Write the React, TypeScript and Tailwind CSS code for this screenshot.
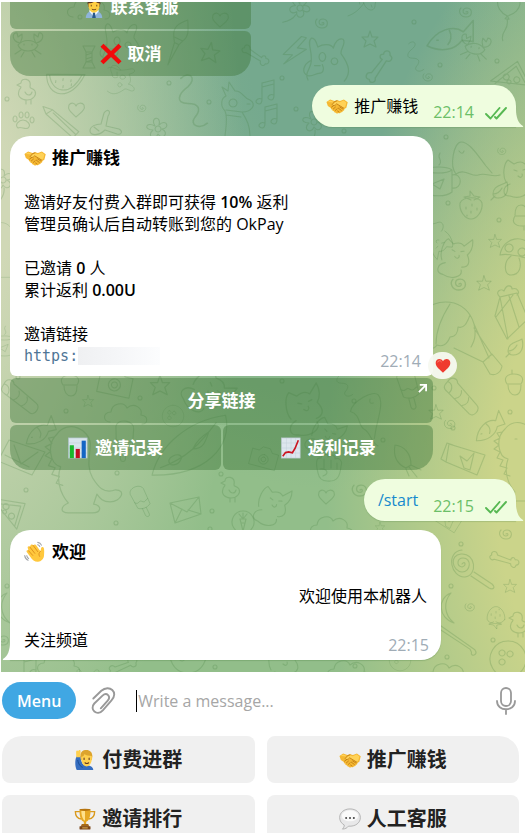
import type { ReactNode } from "react";

const FONT = "font-['Open_Sans','Noto_Sans_CJK_SC',sans-serif]";

/* ---------- Emoji ---------- */

type EmojiName =
  | "handshake"
  | "cross"
  | "bars"
  | "trend"
  | "wave"
  | "raise"
  | "trophy"
  | "speech"
  | "agent"
  | "heart";

const EMOJI: Record<EmojiName, ReactNode> = {
  handshake: (
    <>
      <path d="M.5 7.500 4.500 5l4.700 1.500 3-.900 3 .900L19.500 4.800l4.200 3-1.500 6-2.200 1.400c.3 1.400-.6 2-1.600 2 0 1.200-1 1.900-2 1.600-.5 1.100-1.700 1.600-2.600.9-1 .9-2.600.6-3-.4-1.200.2-2-.5-2.100-1.500-1.300 0-2-.8-1.800-1.900-1.300-.1-1.800-.9-1.600-1.800L2 12z" fill="#f5b833" />
      <path d="m1.500 7.700 3.200-1.600 4.100 1.400-2 3c.6 2 3.200 1.400 4.800-.8 2.200 1.200 5 2.600 7.500 4.400l1.900-1.200 1.200-4.800L19.200 6 15 8l-2.800-1-2.800 1.200" fill="#ffd257" />
      <path d="m12 6.200-3 1.300-2.200 3c.6 1.700 3.200 1.200 4.800-.9l7.700 4.700M6 13.300l2-1.500M8 15.200l2.300-2M10.200 16.800l2-1.800m1.200-.7 3.300 2.500m-4 .7 1.500 1m.7-5.500 3.500 2.300" fill="none" stroke="#bd7b12" strokeWidth=".9" strokeLinecap="round" />
    </>
  ),
  cross: (
    <path d="M3.800.800 12 8.800 20.200.800 23.500 4 15.300 12l8.200 8-3.300 3.200L12 15.200l-8.200 8L.5 20l8.200-8L.500 4z" fill="#f20b0b" />
  ),
  bars: (
    <>
      <rect x="1.5" y="1" width="20.5" height="22" fill="#d9e5ec" stroke="#a9bdc4" strokeWidth=".7" />
      <path d="M2 6.5h20M2 12h20M2 17.500h20" stroke="#b9cbd3" strokeWidth=".5" />
      <rect x="3" y="9" width="4.500" height="14" fill="#19b72b" />
      <rect x="9.500" y="13" width="4.500" height="10" fill="#c30d20" />
      <rect x="16" y="4" width="4.500" height="19" fill="#1465c4" />
    </>
  ),
  trend: (
    <>
      <rect x="1.500" y="1" width="20.500" height="22" fill="#dde6ee" stroke="#b7c5cb" strokeWidth=".7" />
      <path d="M2 6.500h20M2 12h20M2 17.500h20M7 1v22M12 1v22M17 1v22" stroke="#c0ced8" strokeWidth=".5" />
      <path d="m3 21 3-4 3.500-.700 4 .900 3-5L20 3.500" fill="none" stroke="#cb1520" strokeWidth="1.800" />
    </>
  ),
  wave: (
    <>
      <path d="M7 17.500 3 12c-1-1.500.700-2.700 1.900-1.400L4.200 8C3.300 6.300 5.300 5 6.400 6.500L7 5c.300-1.700 2.200-1.600 2.900-.500l1.300-.500c1-.300 1.800.200 2.500 1.300l4.200 6 .700-2.800c0-2 2.300-2.600 3-.800.600 1.700.500 5 .200 8.500-.300 3.500-3 6.300-6.500 6.500-3.500.200-6.200-1.700-8.300-5.200z" fill="#ffc83d" />
      <path d="m4.800 10.500 4.700 5.200M6.300 6.500l5.500 7M9.800 4.600l5.200 7M18 11.300c-2 1.500-2.300 3.500-1 5.500" fill="none" stroke="#dc8d1c" strokeWidth="1" strokeLinecap="round" />
      <path d="M15 1.500c2 .300 3.300 1.400 4 3M15 4c1 .300 1.800 1 2.200 2M.800 16c.200 2 1.500 4 3.700 5M3 16c.300 1.500 1 2.500 2 3" fill="none" stroke="#a4a7ab" strokeWidth="1.200" strokeLinecap="round" />
    </>
  ),
  raise: (
    <>
      <path d="M3 8c-2 3-2.300 10.500 0 15h18c0-3-2.500-5-7-5-4 0-6-2-7-10z" fill="#356dc0" />
      <path d="M2.500 9 2.300 3.500C2.200 1.500 4 1 4.600 2.500L5 1.500c1-1 2.500-.300 2.200 1.200L6.800 9z" fill="#ffd04e" />
      <path d="M7 8c0-5 2.500-7 6.500-7S20 3.500 20 8l-.500 4h-12z" fill="#dda42d" />
      <path d="M8 8.500c2 0 3-1.500 3.500-3 1.500 1.700 5 2 7.800 2 .900 5.500-1.500 11.500-5.500 11.500S7.500 13.800 8 8.500z" fill="#ffd04e" />
      <path d="M11 10v1.500M16.500 10v1.500M12 15c1.300 1 2.800 1 4 0" stroke="#653c20" strokeWidth="1.200" fill="none" strokeLinecap="round" />
      <path d="M4 12c1 5 3 7 5.500 8" stroke="#174a92" fill="none" />
    </>
  ),
  trophy: (
    <>
      <path d="M6.500 4H1.500c0 5 2 7.500 6.500 8m9.500-8h5c0 5-2 7.500-6.500 8" fill="none" stroke="#d99a1e" strokeWidth="1.500" />
      <path d="M6 1.500h12c.300 7-1.500 12.500-4.700 13.500v3h-2.600v-3C7.500 14 5.700 8.500 6 1.500z" fill="#e6a824" />
      <path d="M8 3h4v11C9.500 12.500 8 8.500 8 3z" fill="#ffe18b" />
      <ellipse cx="12" cy="2" rx="6" ry="1.200" fill="#b67510" />
      <path d="M8.500 17.500h7l1.300 3H7.200z" fill="#a4691c" />
      <rect x="6" y="20" width="12" height="3.500" rx=".500" fill="#7c4619" />
      <path d="M9 21.700h6" stroke="#e9bd57" />
    </>
  ),
  speech: (
    <>
      <path d="M12 1C5.500 1 .700 5 .700 10.500c0 3.500 2 6.500 5 8 .200 1.700-.700 3.300-2 4.500 3 0 5.300-1.400 6.600-3.200 7.500.700 13-3.600 13-9.300C23.300 5 18.500 1 12 1z" fill="#e8e8e9" stroke="#aaa" strokeWidth=".900" />
      <ellipse cx="12" cy="8.500" rx="9" ry="6" fill="#fafafa" />
      <circle cx="7.800" cy="11" r="1.100" fill="#444" />
      <circle cx="12" cy="11" r="1.100" fill="#444" />
      <circle cx="16.200" cy="11" r="1.100" fill="#444" />
    </>
  ),
  agent: (
    <>
      <path d="M3 24c0-5 3.500-8 9-8s9 3 9 8z" fill="#8eb4da" />
      <path d="m7 17 5 6 5-6v-2H7z" fill="#eef6ff" />
      <path d="m11 18-1 6h4l-1-6z" fill="#28578c" />
      <path d="M5 8c0-5 3-7 7-7s7 2 7 7l-1 4H6z" fill="#593521" />
      <path d="M6 8c4 0 6-1 7-3 1 2 3 3 5 3 .500 6-2 10-6 10S5.500 14 6 8z" fill="#ffcf42" />
      <path d="M9 10v1m6-1v1m-5 3.500c1.300.800 2.700.800 4 0" fill="none" stroke="#6b4218" strokeLinecap="round" />
    </>
  ),
  heart: (
    <>
      <path d="M12 22C8.500 18 1 14 1 7.500 1 1 9-.500 12 5c3-5.500 11-4 11 2.500C23 14 15.500 18 12 22z" fill="#ef3b2f" />
      <path d="M4 6c1-2.500 4-2.700 5.500-.500" fill="none" stroke="#ff857a" strokeWidth="1.500" strokeLinecap="round" />
    </>
  ),
};

function Emoji({ name, className = "size-[22px]" }: { name: EmojiName; className?: string }) {
  return (
    <svg viewBox="0 0 24 24" className={`shrink-0 ${className}`} aria-hidden="true">
      {EMOJI[name]}
    </svg>
  );
}

/* ---------- Wallpaper ---------- */

// every doodle is drawn around 0,0
const DOODLES = {
  star: "M0-8 2-2 8-2 4 2 6 8 0 5-6 8-4 2-8-2-2-2z",
  heart: "M0 7C-4 3-9 0-7-5c2-3 6-2 7 1 1-3 6-4 8-1C10 0 4 3 0 7z",
  swirl: "M0 0c2-2 3 2 0 2-4 0-4-6 1-6 6 0 6 9-1 9-6 0-8-6-5-9",
  bone: "M-8 4c-5-2-7 4-3 5-1 4 5 4 5 0L6-3c3 2 7-1 4-4 2-4-4-6-5-2-4-1-4 3-2 4z",
  squiggle: "M-8-14c6-6 12 0 5 6-7 5-9 12 0 12 8 0 10 4 5 10-4 5 3 9 9 4",
  chick: "M-9 2c-2 5 2 9 8 9s10-5 8-9c-2-3-5-2-5-4 2-9-9-10-9-4l-4 2 4 2c-1 3-2 2-2 4M-3 3c2 4 6 4 7 0M-2 11v4m5-4v4",
  crab: "M-10 0c5-6 15-6 20 0-3 8-17 8-20 0M-8-2c-9-2-8-11-3-10l1 4 4-3c1 5-1 7-2 9M8-2c9-2 8-11 3-10l-1 4-4-3c-1 5 1 7 2 9M-7 5l-6 4m9-2-3 5M7 5l6 4M4 7l3 5M-4-1v1m8-1v1",
  candy: "M-3-5h6v10h-6zM-3-5l-3-6h12L3-5M-3 5l-3 6h12L3 5M-3-2l6-2m-6 6 6-2m-6 5 6-2",
  dog: "M-20 20c-4-8 4-10 3-20 0-9-4-15 0-18 4-1 5 6 6 8 5-3 12-3 14 1 1-5 5-10 9-8 3 4-3 9-2 13 8 11 9 18 3 25M-17 2c-8 4-9 12-3 14 4 1 7-2 10-2 4 0 5-4 3-8M-7-5a3 4 0 1 0 .1 0M4 0a3 3 0 1 0 .1 0M-14 7h5",
  brush: "M0 25-3 2-6-3c-5-9-1-14 6-21 4 8 8 14 4 21L2 2zM-6-3H4M-3 2h5",
  melon: "M-20-3C-17 20 8 22 18-8zM-17-3C-13 14 6 17 15-7M-10 2v2m7-5v2m1 5v2m7-9v2m1 2v2",
  pencil: "M-15-6-9-11 20 7l-5 7zM-15-6l-4-7 10 2M-8-8 17 10",
  paw: "M-5 8C-9 5-4 0 0 0s9 5 5 8c-3 2-7-2-10 0M-8-4a2 3 0 1 0 .1 0M-2-8a2 3 0 1 0 .1 0M4-8a2 3 0 1 0 .1 0M9-3a2 3 0 1 0 .1 0",
  plane: "M-18 9c0-5 6-7 11-7L-4-9c3-5 8-2 4 3L-2 4l13 3c4 2 3 6-2 5L-3 8c-6 6-15 6-15 1M-14 5l5 4",
  flower: "M0-3a3 3 0 1 0 .1 0M-3-3c-6-9 7-11 4-1 7-7 12 3 3 4 8 4 0 12-4 5-3 8-12 2-5-4-10 0-7-9 2-4M1 8c1 5-2 10-5 14",
  llama: "M-14 28c1-9 3-19 0-25-5-5-4-13 1-15l-4-9 6 4 1-9 6 9c7-1 8 7 15 9 7 4 2 12-8 12 5 8 8 14 8 24M-13 2l16 2M-13 7l15 2M-6-9a4 4 0 1 0 .1 0M8-4h3",
  bolt: "M4-14-9 8l9-2-6 11L12-3 3-2 9-14z",
  balloon: "M0-17c-15 0-15 18 0 23 15-5 15-23 0-23M-2 9l2-3 2 3zM0 9c4 12-6 12-2 22",
  pizza: "M-18 8 3-18l18 20zM-13 9 3-13l14 15M-4-3a3 3 0 1 0 .1 0M7-3a3 3 0 1 0 .1 0M0 2a2 2 0 1 0 .1 0",
  notes: "M-7 7V-9L5-12V3M-7-5 5-8M-7 7c-5-2-9 4-3 5 3 0 3-3 3-5M5 3c-5-2-9 4-3 5 3 0 3-3 3-5",
  mug: "M-13-10c5-4 22-4 27 0v22c-6 5-21 5-27 0zM-13-10c5 4 22 4 27 0M14-5c11-3 11 15 0 13M-7-15c5-5-3-6 1-12m7 12c5-5-3-6 1-12M-6 4l12-5-4 10z",
  whale: "M-18 13c-7-8-2-32 5-32 9 0 17 14 25 24l6 7M-18 13c9-6 15 3 22 1 8-3 14 3 22 0M-15-10c2 3 4 3 5 0",
  leaf: "M-7 3C-7-5 0-5 7-9 9-1 7 7-2 7c-3 0-5-1-5-4m0 0c5 0 7-2 9-6M-5 5l-4 4",
  strawberry: "M-11-3c3-7 20-7 22 0 1 8-5 16-11 16S-12 5-11-3M0-6l-7-3 6-1v-5l4 5 6 1-6 3M-5 1v2m6-5v2m5 2v2M0 5v2m-4 2v1",
  cat: "M-14 12c-4-7-2-19 2-22l6 4c5-3 9-2 11 0l7-8c2 6 1 12-2 16 5 7 3 12-3 13M-6 0l3 1m6-1 3-1M-2 6c3 3 5 0 4-2M-10 14c-8 3-8 12 0 12 10 4 20-2 17-8",
  mushroom: "M-16 2C-13-16 8-20 17-5c5 9-5 12-14 8C-3 3-8 0-16 2M-7-9a4 4 0 1 0 .1 0M6-5a4 4 0 1 0 .1 0M-5 3c-8 6-7 19 0 19 9 0 11-9 8-17",
  airship: "M-40-18C-25-38 7-35 14-9c3 14-1 19-3 23M14-9 29 25M-6 15l29 14m-9-34 18 27M-36 21c4-9 9-2 13-9 5 2 10 0 13-8 5 0 8-4 8-10 6 2 9-4 12-12M23 29l9-8 10 12c-1 7-7 10-12 8zM-10-29c-9 14-14 28-14 40",
  cake: "M-13 3-8-16 9-20l11 26-21 20zM-8-16 0 26M1-17l10 31M-8-16c-6-5 1-9 4-6 3-8 8-5 8-2 6-2 8 4 5 6M-12 4 5-18",
  caterpillar: "M-18-10c3-7 10-4 10 0L14 9c5 4-1 13-6 10L-17 0c-5-3-4-6-1-10m0 0c6 1 6 8 3 11M-9 6c6-2 7-6 6-9M-1 12c6-2 7-6 6-9",
  acorn: "M-7-1c-4-6 0-10 7-10s11 4 7 10zM-6 0c0 6 3 10 7 10s6-4 6-10M-2-11v-4",
  popsicle: "M-11-10c0-9 18-9 18 0L9 9c-5 4-12 4-16 1zM-9 2c4 5 6-2 9 1 4 4 5-1 8-1M-2 12l1 9c1 4 6 3 5-1l-1-8",
  camera: "M-16-7h8l4-5H5l4 5h8v20h-33zM0-3a6 6 0 1 0 .1 0M0 0a3 3 0 1 0 .1 0",
  cloud: "M-17 9c-7 0-8-10 1-10C-15-10-3-12 0-5 7-11 16-5 14 2c8 1 7 9 1 9",
  fish: "M-15 7C-8-5 4-8 11-3l7-8v15l-8-1C5 10-5 12-15 7M-8 3h1M1-4c2 4 1 8-1 10",
  dino: "M-17-33c10-13 29-4 30 9 0 11-4 20 2 31 5 8 10 15 21 11 10 0 5 11-5 11-7 0-9-3-12-7l-3 9c8 1 7 8-1 8H-7c-8 0-7-6 0-9-8-9-11-22-7-33-10-2-13-21-3-30M-20-30l-5 1 3 5-6 3 5 4-5 4 6 3-3 6 6 2-3 6 7 2-3 6 6 2M-7-23h2",
  surf: "M-39 22c7-29 35-52 70-57 7 29-18 58-70 57M-31 15c25-9 38-23 53-43M-21 12c-8-6 10-14 10-6-2 5-5 7-10 6M0-3c4-9 10-13 15-16-3 9-5 16-15 16",
  envelope: "M-15-7 14-13l2 17-26 9zM-15-7 2 2l12-15M-10 13-3-1m19 5L3 0",
  jar: "M-19-14 17-3l-8 20-31-13zM-22 4l-5-3 6-16 6 2M-8-2l7 5 7-8-4 17-6-2z",
  rocket: "M-11-16c9 1 16 8 16 20l-5 3c-9-4-13-12-11-23M0 8l3 7m0-9 8 10m-6-12 10 5",
  fist: "M-12 5c-3-12-1-16 3-15 1-6 7-5 7-1 3-4 8-1 7 2 4-2 8 2 6 7-1 11-4 16-14 15-6 0-8-3-9-8m6-14v9m7-8v8m6-5v6M-10 1c7-1 10 5 3 7",
  lollipop: "M-3-3c3-4 5 2 0 3-6-1-5-9 1-9 9 0 8 14-1 14-10-1-13-17-1-18 15-1 17 21 4 23C-14 11-20-15-3-17M9 5l18 12c4 4 1 6-3 4L6 9",
  moon: "M2-17c-14 5-13 25 3 30-10-8-11-21-3-30",
  cane: "M-28-21 13 0c5 5-4 8-3 3l-2-3-38-18z",
  ball: "M0-18a18 18 0 1 0 .1 0M-6-9a3 3 0 1 0 .1 0M2-8a3 3 0 1 0 .1 0M-6 0a3 3 0 1 0 .1 0",
  photo: "M-14-15 22-3 9 20-25 6zM-9-10-2 9 15-3M-18 0 6 12",
  carrot: "M0-11a11 11 0 1 0 .1 0M-3-3h6L0 9zM0-3v-6m0 6-4-5m4 5 4-5M-2 1h3",
};

type Doodle = [keyof typeof DOODLES, number, number, number?, number?];

const SCENE: Doodle[] = [
  ["crab", 28, 45], ["candy", 89, 57], ["dog", 124, 42], ["brush", 178, 42, 24], ["heart", 220, 20],
  ["star", 210, 52, 8, 1.2], ["bone", 256, 56, 75], ["melon", 66, 80, 8], ["chick", 28, 89], ["heart", 76, 110],
  ["pencil", 60, 122, 8], ["paw", 23, 120], ["plane", 108, 122], ["swirl", 142, 108, 0, 0.7], ["flower", 158, 129],
  ["squiggle", 192, 98, 0, 1.4], ["llama", 239, 108], ["dog", 122, 82, 90, 0.7], ["cloud", 90, 8],
  ["flower", 300, 8, 40], ["swirl", 322, 23], ["llama", 366, 0, 70, 0.8], ["bolt", 294, 49, 15], ["star", 370, 39],
  ["bone", 380, 66, -12, 1.2], ["dog", 330, 58, 0, 1.1], ["squiggle", 415, 55, 0, 0.8], ["crab", 475, 48, 10], ["fish", 448, 36, 0, 1.4],
  ["swirl", 466, 12], ["balloon", 508, 10, 6], ["pizza", 510, 78, 15], ["notes", 269, 92], ["notes", 272, 116],
  ["swirl", 428, 77, 0, 0.8], ["flower", 314, 122], ["mug", 438, 180], ["whale", 474, 161], ["swirl", 502, 151, 0, 0.7],
  ["leaf", 500, 191], ["strawberry", 471, 206], ["cat", 520, 170], ["acorn", 522, 215, 180], ["cat", 458, 251, 12],
  ["cat", 440, 245, 150, 0.8], ["star", 495, 241, 0, 0.8], ["star", 484, 283, 0, 0.9], ["swirl", 459, 284, 0, 1.2],
  ["mushroom", 516, 253], ["airship", 460, 333], ["cake", 508, 313], ["leaf", 515, 348], ["caterpillar", 464, 394, 8],
  ["acorn", 514, 385], ["star", 436, 412, 0, 0.9], ["cat", 305, 402, -10, 1.2], ["popsicle", 409, 386, -8],
  ["whale", 372, 417, 50], ["squiggle", 344, 380, 0, 0.8], ["acorn", 70, 386], ["camera", 115, 382, 12], ["star", 160, 385, 0, 1.2],
  ["star", 88, 401, 0, 0.7], ["cloud", 127, 413], ["caterpillar", 22, 394], ["cat", 215, 388, 50, 1.2], ["ball", 173, 416, 0, 0.6],
  ["fish", 38, 432, -20], ["dino", 76, 470, 0, 1.1], ["popsicle", 141, 499, -18, 0.8], ["popsicle", 125, 438, 10], ["surf", 193, 452, 0, 1.05],
  ["chick", 232, 487], ["envelope", 185, 510], ["carrot", 243, 522], ["pizza", 8, 510, 60], ["photo", 23, 455],
  ["camera", 264, 457, 15, 0.8], ["fish", 487, 428, -25], ["dino", 522, 462], ["jar", 468, 458], ["rocket", 406, 461],
  ["fist", 330, 468], ["heart", 326, 497], ["swirl", 360, 490, 0, 1.2], ["cat", 276, 500, 20], ["cloud", 333, 526],
  ["cat", 330, 432, 30], ["star", 380, 527, 0, 0.6], ["swirl", 506, 534], ["jar", 450, 520, 10, 0.7], ["lollipop", 465, 567],
  ["bone", 505, 560, 60], ["star", 510, 586, 0, 0.8], ["swirl", 470, 607, 0, 0.8], ["strawberry", 496, 617, 180, 0.8],
  ["moon", 449, 610], ["cane", 462, 648, 8], ["ball", 508, 659], ["chick", 520, 622], ["swirl", 450, 424, 0, 0.9],
  ["cloud", 60, 664], ["bone", 124, 666, 20], ["dog", 90, 682, 0, 0.7], ["ball", 188, 655], ["cat", 285, 658],
  ["cloud", 350, 670], ["ball", 400, 660, 0, 0.6], ["cloud", 449, 673], ["flower", 3, 180], ["dino", 4, 250, 0, 0.7],
  ["mug", 4, 345, 0, 0.7], ["moon", 5, 610], ["swirl", 3, 640], ["notes", 31, 667],
];

const DOTS = [
  [169, 83], [209, 102], [414, 22], [282, 78], [440, 65], [497, 61], [296, 109], [344, 131], [446, 137], [448, 203],
  [499, 220], [18, 377], [66, 411], [140, 398], [282, 381], [354, 401], [434, 388], [510, 412], [117, 473], [26, 490],
  [116, 523], [221, 474], [212, 511], [210, 529], [453, 428], [461, 544], [451, 586], [447, 657], [493, 640], [215, 667],
  [7, 99], [80, 17], [7, 586], [383, 440], [355, 666],
];

function Wallpaper() {
  return (
    <svg
      className="absolute inset-0 h-full w-full"
      fill="none"
      stroke="#3f7a3c"
      strokeOpacity="0.22"
      strokeWidth="1.1"
      strokeLinecap="round"
      strokeLinejoin="round"
      aria-hidden="true">
      {SCENE.map(([name, x, y, turn = 0, scale = 1], i) => (
        <path key={i} d={DOODLES[name]} transform={`translate(${x - 1} ${y - 2}) rotate(${turn}) scale(${scale})`} />
      ))}
      {DOTS.map(([x, y]) => (
        <circle key={`${x}-${y}`} cx={x - 1} cy={y - 2} r="2" />
      ))}
    </svg>
  );
}

/* ---------- Messages ---------- */

function InlineButton({ children, className = "" }: { children: ReactNode; className?: string }) {
  return (
    <button
      type="button"
      className={`relative flex h-[45px] flex-1 items-center justify-center gap-1.5 bg-[#3f773a]/43 text-[17px] leading-[22px] font-bold text-white ${className}`}>
      {children}
    </button>
  );
}

function Sent({ time, children }: { time: string; children: ReactNode }) {
  return (
    <div className="relative flex items-center self-end rounded-[21px] rounded-br-none bg-[#effddf] py-2.5 pr-[9px] pl-3.5 shadow-[0_1px_1px_rgba(80,130,70,0.25)]">
      <div className="flex items-center gap-1.5 text-base leading-[22px]">{children}</div>
      <time className="mt-3 ml-[15px] text-base leading-[10px] text-[#6cbf68]">{time}</time>
      <svg viewBox="0 0 22 13" className="mt-3 -mb-[3px] ml-[11px] h-[13px] w-[22px]" fill="none" stroke="#57b852" strokeWidth="1.9" aria-hidden="true">
        <path d="m1 7 4.500 4.500L14.500 1M10 10l1.500 1.500L21 1" strokeLinecap="round" strokeLinejoin="round" />
      </svg>
      <svg viewBox="0 0 8 18" className="absolute bottom-0 left-full h-[18px] w-2" aria-hidden="true">
        <path d="M0 0c0 8 2 14 7 17 .5.500 0 1-1 1H0z" fill="#effddf" />
      </svg>
    </div>
  );
}

function Title({ emoji, children }: { emoji: EmojiName; children: ReactNode }) {
  return (
    <h2 className="flex h-[22px] items-center gap-1.5 text-[17px] leading-[22px] font-bold">
      <Emoji name={emoji} />
      {children}
    </h2>
  );
}

function Chat() {
  return (
    <main className="relative mx-px flex min-h-0 flex-1 flex-col overflow-hidden bg-[#92be8a] bg-[radial-gradient(ellipse_50%_85%_at_112%_72%,#cbd48a_35%,#cbd48a00_100%),radial-gradient(ellipse_55%_90%_at_-8%_30%,#d0d8b6_18%,#d0d8b600_100%),radial-gradient(ellipse_75%_65%_at_66%_8%,#75a98e_25%,#75a98e00_100%)]">
      <Wallpaper />
      <div className="relative flex min-h-0 flex-1 flex-col justify-end gap-[9px] pr-[9px] pb-3 pl-[9px]">
        <div className="flex w-full max-w-[241px] flex-col gap-0.5">
          <div className="flex">
            <InlineButton className="rounded-md">
              <Emoji name="agent" />
              联系客服
            </InlineButton>
          </div>
          <div className="flex">
            <InlineButton className="rounded-t-md rounded-b-[20px]">
              <Emoji name="cross" />
              取消
            </InlineButton>
          </div>
        </div>

        <Sent time="22:14">
          <Emoji name="handshake" />
          推广赚钱
        </Sent>

        <div className="flex w-full max-w-[423px] flex-col gap-0.5">
          <article className="relative rounded-t-[20px] rounded-b-md bg-white px-3.5 pt-[11px] pb-[9px] text-base leading-[22px] text-black">
            <Title emoji="handshake">推广赚钱</Title>
            <p className="mt-[22px]">
              邀请好友付费入群即可获得 <b className="font-semibold">10%</b> 返利
            </p>
            <p>管理员确认后自动转账到您的 OkPay</p>
            <p className="mt-[22px]">
              已邀请 <b className="font-semibold">0</b> 人
            </p>
            <p>
              累计返利 <b className="font-semibold">0.00U</b>
            </p>
            <p className="mt-[22px]">邀请链接</p>
            <p className="flex items-center">
              <a href="#invite" className="font-['DejaVu_Sans_Mono',monospace] text-[15px] text-[#4f7596]">
                https:
              </a>
              <span className="h-[18px] w-[82px] bg-linear-to-r from-[#eff0f2] via-[#f5f6f8] to-[#fcfdfe]" />
            </p>
            <time className="absolute right-3 bottom-1 text-[#a0acb6]">22:14</time>
            <button
              type="button"
              aria-label="Heart"
              className="absolute -right-6 -bottom-[3px] flex h-[27px] w-[29px] items-center justify-center rounded-full bg-[#f7f9f0]/95">
              <Emoji name="heart" className="size-4" />
            </button>
          </article>
          <div className="flex">
            <InlineButton className="rounded-md">
              分享链接
              <svg viewBox="0 0 10 10" className="absolute top-1.5 right-1.5 size-[9px]" fill="none" stroke="white" strokeWidth="2" aria-hidden="true">
                <path d="M2 1h7v7M9 1 1 9" />
              </svg>
            </InlineButton>
          </div>
          <div className="flex gap-0.5">
            <InlineButton className="rounded-md rounded-bl-[20px]">
              <Emoji name="bars" />
              邀请记录
            </InlineButton>
            <InlineButton className="rounded-md rounded-br-[20px]">
              <Emoji name="trend" />
              返利记录
            </InlineButton>
          </div>
        </div>

        <Sent time="22:15">
          <a href="#start" className="text-[#168acd]">
            /start
          </a>
        </Sent>

        <article className="relative w-full max-w-[431px] rounded-[20px] rounded-bl-none bg-white px-3.5 pt-[11px] pb-[9px] text-base leading-[22px] text-black shadow-[0_1px_1px_rgba(80,130,70,0.3)]">
          <Title emoji="wave">欢迎</Title>
          <p className="mt-[22px] text-right">欢迎使用本机器人</p>
          <p className="mt-[22px]">关注频道</p>
          <time className="absolute right-3 bottom-1 text-[#a0acb6]">22:15</time>
          <svg viewBox="0 0 8 18" className="absolute right-full bottom-0 h-[18px] w-2" aria-hidden="true">
            <path d="M8 0c0 8-2 14-7 17-.5.500 0 1 1 1h6z" fill="white" />
          </svg>
        </article>
      </div>
    </main>
  );
}

/* ---------- Composer and keyboard ---------- */

function Composer() {
  return (
    <form className="flex h-[57px] shrink-0 items-center pr-2.5 pl-0.5" onSubmit={(e) => e.preventDefault()}>
      <button type="button" className="h-[37px] rounded-full bg-[#40a7e3] px-[15px] text-base font-semibold text-white">
        Menu
      </button>
      <button type="button" aria-label="Attach file" className="ml-[15px]">
        <svg viewBox="0 0 25 28" className="h-7 w-[25px]" fill="none" stroke="#999" strokeWidth="1.9" strokeLinecap="round">
          <path d="M2.300 11.500 10.300 3.800C18.500-3.300 28 5.500 20.500 13.300L11.800 23.300C6 29.500-2 22.500 3.300 16.500L11.500 8.600c4.300-3.700 8.800.8 5.200 5L9.800 21.300" />
        </svg>
      </button>
      <div className="ml-5 flex min-w-0 flex-1 border-l border-black">
        <input
          type="text"
          aria-label="Message"
          placeholder="Write a message..."
          className="h-[22px] w-full min-w-0 bg-transparent pl-px text-base outline-none placeholder:text-[#a6a6a6]"
        />
      </div>
      <button type="button" aria-label="Record voice message">
        <svg viewBox="0 0 20 28" className="h-7 w-5" fill="none" stroke="#999" strokeWidth="1.800" strokeLinecap="round">
          <rect x="5" y="1" width="10" height="18" rx="5" />
          <path d="M1 14c0 11 18 11 18 0M10 22.500V27" />
        </svg>
      </button>
    </form>
  );
}

const KEYS: { emoji: EmojiName; label: string; corner: string }[] = [
  { emoji: "raise", label: "付费进群", corner: "rounded-tl-[20px]" },
  { emoji: "handshake", label: "推广赚钱", corner: "rounded-tr-[20px]" },
  { emoji: "trophy", label: "邀请排行", corner: "" },
  { emoji: "speech", label: "人工客服", corner: "" },
];

function Keyboard() {
  return (
    <div className="mt-[7px] grid max-h-[97px] shrink-0 grid-cols-2 gap-3 overflow-hidden pr-[7px] pl-0.5">
      {KEYS.map((key) => (
        <button
          key={key.label}
          type="button"
          className={`flex h-[47px] items-center justify-center gap-1.5 rounded-lg bg-[#f0f0f0] text-xl font-bold text-[#222] ${key.corner}`}>
          <Emoji name={key.emoji} />
          {key.label}
        </button>
      ))}
    </div>
  );
}

export default function App() {
  return (
    <div className={`flex h-screen flex-col overflow-hidden bg-white pt-0.5 pb-[3px] ${FONT}`}>
      <Chat />
      <Composer />
      <Keyboard />
    </div>
  );
}
